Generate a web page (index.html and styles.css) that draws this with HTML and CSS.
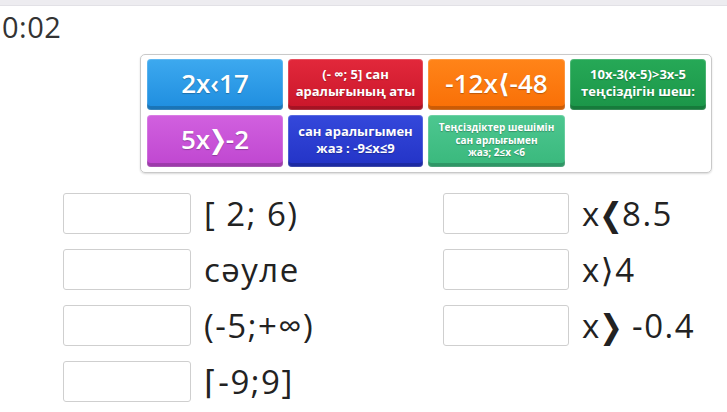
FILE: index.html
```html
<!DOCTYPE html>
<html>
<head>
<meta charset="utf-8">
<link rel="stylesheet" href="styles.css">
</head>
<body>
<div class="topbar"></div>
<div class="timer">0:02</div>
<div class="board">
  <div class="tile blue big">2x‹17</div>
  <div class="tile red small">(- ∞; 5] сан<br>аралығының аты</div>
  <div class="tile orange big">-12x⟨-48</div>
  <div class="tile dgreen small">10x-3(x-5)&gt;3x-5<br>теңсіздігін шеш:</div>
  <div class="tile purple big">5x<span class="chev">❯</span>-2</div>
  <div class="tile dblue small">сан аралыгымен<br>жаз : -9≤x≤9</div>
  <div class="tile lgreen tiny">Теңсіздіктер шешімін<br>сан арлығымен<br>жаз; 2≤x &lt;6</div>
</div>
<div class="answers">
  <div class="col col-left">
    <div class="row"><div class="slot"></div><span class="label">[ 2; 6)</span></div>
    <div class="row"><div class="slot"></div><span class="label">сәуле</span></div>
    <div class="row"><div class="slot"></div><span class="label">(-5;+∞)</span></div>
    <div class="row"><div class="slot"></div><span class="label">⌈-9;9]</span></div>
  </div>
  <div class="col col-right">
    <div class="row"><div class="slot slot-r"></div><span class="label">x<span class="chev">❮</span>8.5</span></div>
    <div class="row"><div class="slot slot-r"></div><span class="label">x⟩4</span></div>
    <div class="row"><div class="slot slot-r"></div><span class="label">x<span class="chev">❯</span> -0.4</span></div>
  </div>
</div>
</body>
</html>
```
FILE: styles.css
```css
html, body {
  margin: 0;
  padding: 0;
  background: #ffffff;
  font-family: "Open Sans", "DejaVu Sans", sans-serif;
  width: 727px;
  height: 412px;
  overflow: hidden;
}
.topbar {
  height: 5px;
  background: #edecf0;
  border-bottom: 1px solid #e2e1e6;
}
.timer {
  font-size: 29px;
  line-height: 40px;
  color: #333;
  padding-left: 2px;
  margin-top: 1px;
  height: 41px;
  letter-spacing: 0.5px;
}
.board {
  margin-left: 140px;
  margin-top: 6px;
  width: 558px;
  height: 108px;
  border: 1.5px solid #c9c9c9;
  border-radius: 5px;
  padding: 4px 6px 5px 6px;
  display: grid;
  grid-template-columns: 136px 135px 137px 136px;
  grid-template-rows: 51px 52px;
  column-gap: 5px;
  row-gap: 5px;
  box-shadow: 0 1px 2px rgba(0,0,0,0.15);
}
.tile {
  border-radius: 4px;
  color: #fff;
  display: flex;
  flex-direction: column;
  align-items: center;
  justify-content: center;
  text-align: center;
  font-weight: 600;
  box-shadow: inset 0 -4px 0 rgba(0,0,0,0.18), inset 0 0 0 1px rgba(255,255,255,0.18);
  text-shadow: 0 1px 1px rgba(0,0,0,0.25);
  padding-bottom: 3px;
  box-sizing: border-box;
}
.big { font-size: 26px; display: block; line-height: 48px; }
.small { font-size: 13px; line-height: 17px; font-weight: 700; }
.tiny { font-size: 10px; line-height: 12.5px; font-weight: 700; display: block; padding-top: 6px; }
.blue { background: linear-gradient(#3da9ef, #1e8ddf); }
.red { background: linear-gradient(#e2283b, #c9162a); }
.orange { background: linear-gradient(#ff8419, #f96f06); }
.dgreen { background: linear-gradient(#26a957, #1b9548); }
.purple { background: linear-gradient(#d160df, #bf46d0); }
.dblue { background: linear-gradient(#3448db, #2333c6); }
.lgreen { background: linear-gradient(#4dc790, #39b87c); }

.chev {
  font-family: "DejaVu Sans", sans-serif;
  display: inline-block;
  margin: 0 -0.12em;
  transform: scaleX(0.85);
}

.answers {
  display: flex;
  margin-top: 19px;
  padding-left: 63px;
}
.col {
  display: flex;
  flex-direction: column;
  gap: 14px;
}
.col-left { width: 380px; }
.row {
  display: flex;
  align-items: center;
  height: 42px;
}
.slot {
  width: 126px;
  height: 39px;
  border: 1.5px solid #cfcfcf;
  border-radius: 3px;
  background: #fff;
}
.slot-r { width: 124px; }
.label {
  margin-left: 13px;
  font-size: 33px;
  letter-spacing: 1.5px;
  color: #222;
  white-space: nowrap;
}
```
